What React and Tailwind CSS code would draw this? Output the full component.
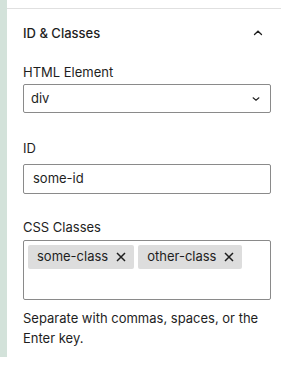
import React from 'react';

function ChevronUp() {
  return (
    <svg width="12" height="12" viewBox="0 0 24 24" fill="none" stroke="#1e1e1e" strokeWidth="2.6" strokeLinecap="round">
      <path d="M5 15l7-6.5 7 6.5" />
    </svg>
  );
}

function ChevronDown() {
  return (
    <svg width="10" height="10" viewBox="0 0 24 24" fill="none" stroke="#1e1e1e" strokeWidth="2.6" strokeLinecap="round">
      <path d="M5 9l7 6 7-6" />
    </svg>
  );
}

function Tag({ label }) {
  return (
    <span className="flex items-center h-[24px] pl-[9px] pr-[8px] bg-[#dddddd] rounded-[2px] text-[13px] text-[#1e1e1e]">
      {label}
      <svg className="ml-[8px]" width="10" height="10" viewBox="0 0 10 10" stroke="#1e1e1e" strokeWidth="1.5">
        <path d="M1 1l8 8M9 1L1 9" />
      </svg>
    </span>
  );
}

export default function App() {
  return (
    <div className="flex w-[281px] h-[366px] bg-white text-[#1e1e1e]" style={{ fontFamily: 'Inter, "Noto Sans", sans-serif' }}>
      {/* left accent strip */}
      <div className="w-[7px] h-[357px] bg-[#d3e2da] shrink-0" />

      <div className="flex-1 mt-[8px] border-t border-[#e0e0e0] pl-[16px] pr-[10px] pt-[16px]">
        <div className="flex items-center justify-between h-[16px] leading-[16px]">
          <span className="text-[13px] font-medium">ID &amp; Classes</span>
          <span className="mr-[7px] flex"><ChevronUp /></span>
        </div>

        <div className="mt-[23px] text-[13px] leading-[16px]">HTML Element</div>
        <div className="mt-[4px] h-[29px] border border-[#8a8a8a] rounded-[2px] flex items-center justify-between pl-[7px] pr-[9px] text-[13px]">
          <span>div</span>
          <ChevronDown />
        </div>

        <div className="mt-[27px] text-[13px] leading-[16px]">ID</div>
        <div className="mt-[8px] h-[30px] border border-[#8a8a8a] rounded-[2px] flex items-center pl-[9px] text-[13px]">
          some-id
        </div>

        <div className="mt-[25px] text-[13px] leading-[16px]">CSS Classes</div>
        <div className="mt-[5px] h-[60px] border border-[#8a8a8a] rounded-[2px] pl-[4px] pt-[4px] flex items-start gap-[4px]">
          <Tag label="some-class" />
          <Tag label="other-class" />
        </div>

        <p className="mt-[8px] text-[13px] leading-[20px]">
          Separate with commas, spaces, or the Enter key.
        </p>
      </div>
    </div>
  );
}
